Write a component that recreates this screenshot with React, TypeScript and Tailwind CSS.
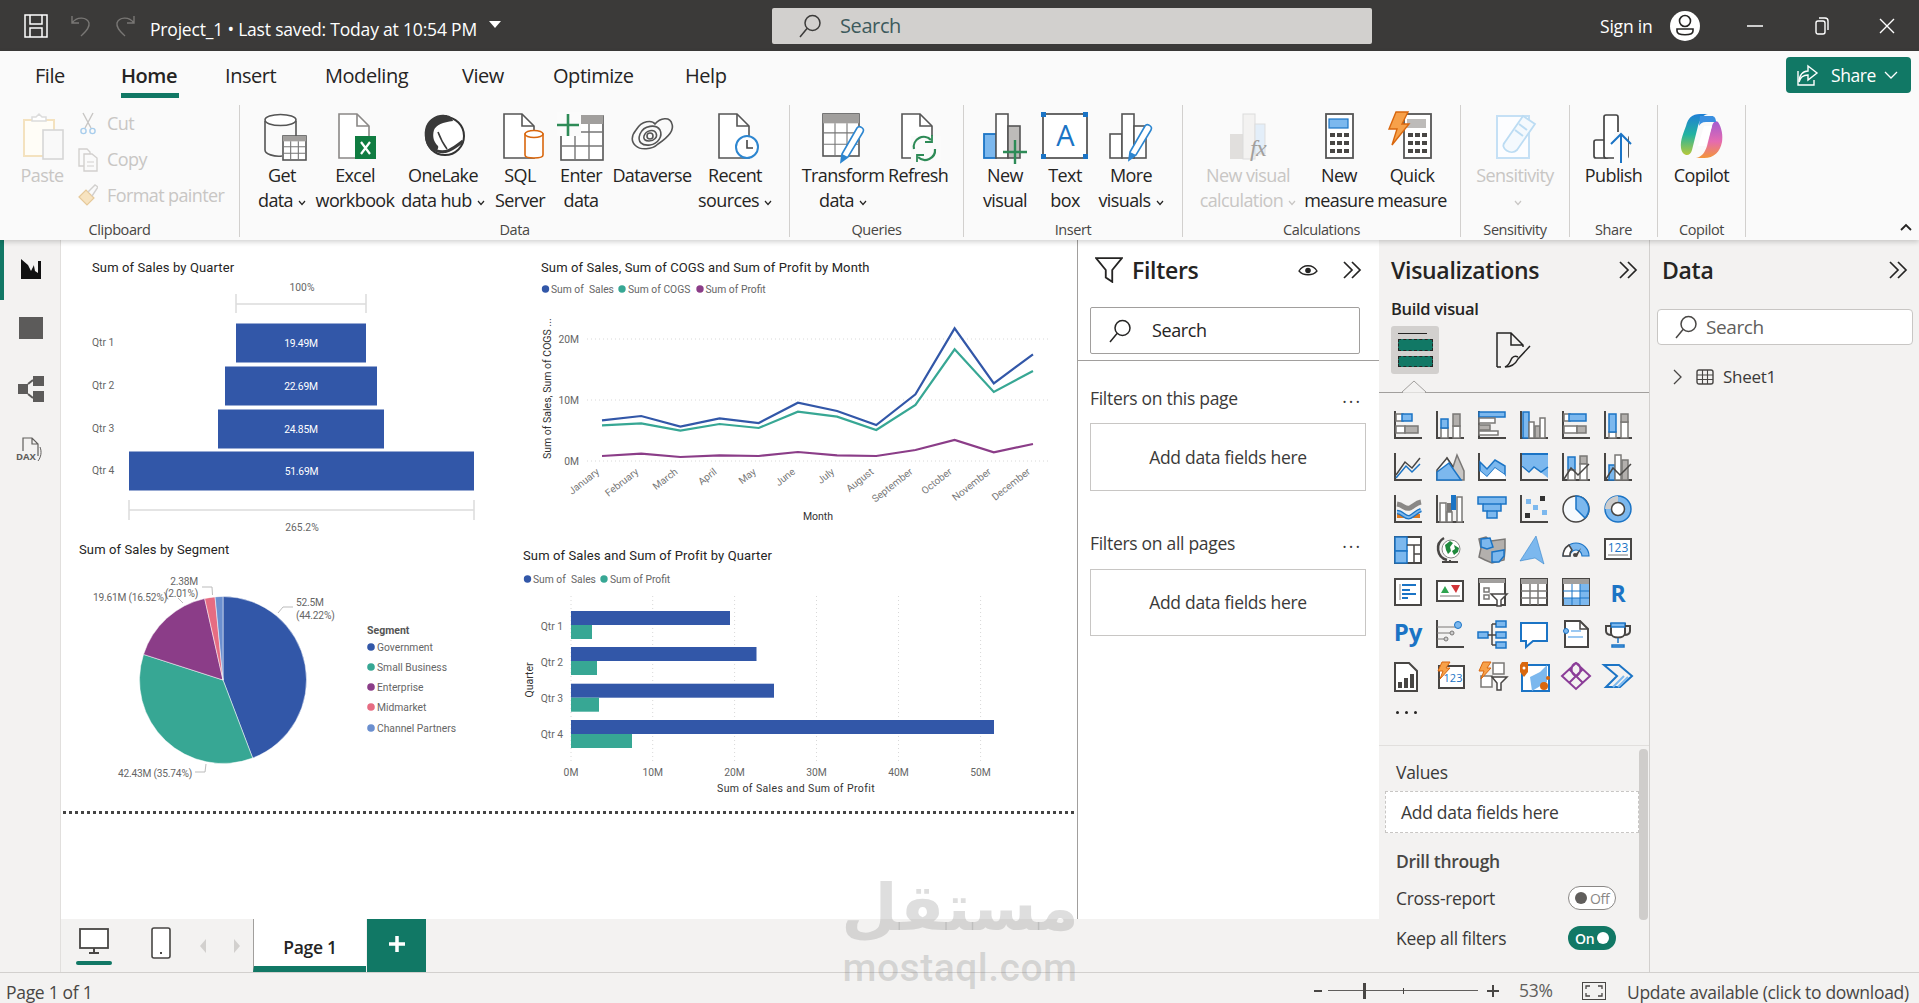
import React from "react";

const D = "#484644", B = "#1b74c5", L = "#7cb8ee", G = "#b3b0ad", GS = "#7a7876", T = "#117865";
const ln = { fill: "none", stroke: D, strokeWidth: 1.5 } as const;
const bl = { fill: L, stroke: B, strokeWidth: 1.5 } as const;
const gr = { fill: G, stroke: GS, strokeWidth: 1.5 } as const;
const wh = { fill: "#fff", stroke: GS, strokeWidth: 1.5 } as const;

const Axis = () => <path d="M1 0V27H28" {...ln} strokeWidth={2} />;
const Bolt = ({ x = 0, y = 0 }: { x?: number; y?: number }) => (
  <path transform={`translate(${x} ${y})`} d="M5 0H13L9 6H13L3 17L6 9H1Z" fill="#f7a14a" stroke="#d9670e" strokeWidth={1} />
);

const gridIcons: React.ReactNode[] = [
  <><Axis /><rect x="2" y="3" width="7" height="7" {...wh} /><rect x="8" y="3" width="10" height="7" {...bl} /><rect x="2" y="15" width="9" height="7" {...wh} /><rect x="11" y="15" width="13" height="7" {...gr} /></>,
  <><Axis /><rect x="5" y="17" width="7" height="10" {...wh} /><rect x="5" y="8" width="7" height="9" {...bl} /><rect x="17" y="15" width="7" height="12" {...wh} /><rect x="17" y="3" width="7" height="12" {...gr} /></>,
  <><Axis /><rect x="1" y="1" width="26" height="5" {...bl} /><rect x="1" y="7" width="16" height="5" {...wh} /><rect x="1" y="14" width="11" height="5" {...gr} /><rect x="1" y="20" width="19" height="4" {...wh} /></>,
  <><Axis /><rect x="3" y="1" width="6" height="26" {...bl} /><rect x="9" y="11" width="5" height="16" {...wh} /><rect x="15" y="15" width="5" height="12" {...gr} /><rect x="20" y="7" width="5" height="20" {...wh} /></>,
  <><Axis /><rect x="2" y="3" width="6" height="7" {...wh} /><rect x="7" y="3" width="17" height="7" {...bl} /><rect x="2" y="15" width="13" height="7" {...wh} /><rect x="15" y="15" width="9" height="7" {...gr} /></>,
  <><Axis /><rect x="5" y="21" width="7" height="6" {...wh} /><rect x="5" y="3" width="7" height="18" {...bl} /><rect x="17" y="11" width="7" height="16" {...wh} /><rect x="17" y="3" width="7" height="8" {...gr} /></>,
  <><Axis /><path d="M2 22L11 9L18 15L26 5" {...ln} fill="none" /><path d="M2 25L12 13L18 19L26 11" fill="none" stroke={B} strokeWidth={1.5} /></>,
  <><path d="M1 27L11 5L17 14L21 2L28 18V27Z" {...gr} fill="#c8c6c4" /><path d="M1 27V17L11 5L17 14" fill="#fff" stroke={D} strokeWidth={1.5} /><path d="M1 27V19L5 16L13 10L25 27Z" {...bl} /></>,
  <><Axis /><path d="M2 9L9 16L17 7L27 13V22L17 15L9 24L2 18Z" {...bl} /><path d="M2 18L9 24L17 15L27 22V26H2Z" fill="#fff" /></>,
  <><Axis /><path d="M2 2H28V8L28 25L14 14L9 18L2 12Z" fill={L} /><path d="M2 1H28" stroke={B} strokeWidth={2} /><path d="M2 13L9 19L14 14L21 19L28 14" fill="none" stroke={B} strokeWidth={1.5} /></>,
  <><Axis /><rect x="6" y="4" width="7" height="13" {...bl} /><rect x="6" y="17" width="7" height="10" {...wh} /><rect x="18" y="3" width="7" height="8" {...gr} /><rect x="18" y="11" width="7" height="16" {...wh} /><path d="M2 26L9 15L16 22L27 11" {...ln} /></>,
  <><Axis /><rect x="5" y="12" width="6" height="15" {...bl} /><rect x="11" y="2" width="6" height="25" {...wh} /><rect x="18" y="7" width="6" height="20" {...gr} /><path d="M2 26L9 15L16 22L27 11" {...ln} /></>,
  <><Axis /><rect x="3" y="19" width="7" height="4" fill="#e07a1f" /><rect x="19" y="19" width="7" height="4" fill="#e07a1f" /><path d="M3 9C10 10 11 15 16 13C20 11 22 8 27 7" fill="none" stroke="#8a8886" strokeWidth={5} /><path d="M3 17C9 17 11 24 16 22C20 20 22 17 27 15" fill="none" stroke={B} strokeWidth={4.5} /><path d="M3 17C9 17 11 24 16 22C20 20 22 17 27 15" fill="none" stroke={L} strokeWidth={1.8} /></>,
  <><Axis /><rect x="4" y="8" width="6" height="19" {...wh} /><rect x="11" y="8" width="5" height="9" fill={GS} /><rect x="11" y="17" width="5" height="10" {...wh} /><rect x="15" y="0" width="5" height="15" fill={B} /><rect x="21" y="2" width="5" height="25" {...wh} /></>,
  <><path d="M0 2H28V9H23V16H19V23H9V16H5V9H0Z" {...bl} /><path d="M5 9H23M9 16H19" stroke={B} strokeWidth={1.5} /></>,
  <><Axis /><rect x="6" y="4" width="5" height="5" fill={L} /><rect x="20" y="1" width="5" height="5" fill="#333" /><rect x="13" y="10" width="5" height="5" fill={L} /><rect x="5" y="18" width="5" height="5" fill="#333" /><rect x="22" y="15" width="5" height="5" fill={L} /></>,
  <><circle cx="14" cy="14" r="13" fill="#f6fafd" stroke={D} strokeWidth={1.5} /><path d="M14 1A13 13 0 0 1 23 23L14 14Z" {...bl} /></>,
  <><circle cx="14" cy="14" r="13" fill={L} stroke={B} strokeWidth={1.5} /><path d="M14 1A13 13 0 0 0 1 14H8A6 6 0 0 1 14 8Z" fill="#ccc" /><circle cx="14" cy="14" r="6.5" fill="#fff" stroke={D} strokeWidth={1.5} /></>,
  <><rect x="1" y="1" width="26" height="26" fill="#fff" stroke={D} strokeWidth={2} /><rect x="1" y="1" width="12" height="14" {...bl} /><rect x="1" y="15" width="12" height="12" {...bl} /><path d="M13 9H27M20 9V27M20 18H27" {...ln} /></>,
  <><path d="M8 2A12 12 0 0 0 11 24" {...ln} strokeWidth={2.5} /><circle cx="15" cy="13" r="9" fill="#fff" stroke="#888" /><path d="M9 9L14 5L17 7L14 11L15 15L12 18L10 14ZM18 9L23 12L22 16L18 19L16 15L19 13Z" fill="#1f8a3d" /><path d="M6 26H22M14 24V26" {...ln} strokeWidth={2} /></>,
  <><path d="M1 3L8 1L13 5L27 3V14L26 24L14 27L7 24L1 21L3 12Z" {...gr} /><path d="M3 3L12 2L15 11L9 13L3 11Z" {...bl} /><path d="M14 16L26 14V20L21 26L14 26Z" {...bl} /></>,
  <path d="M16 0L24 28L15 22L0 25Z" fill={L} stroke={B} strokeWidth={0.5} />,
  <><path d="M1 20A13 13 0 0 1 27 20H20A6 6 0 0 0 8 20Z" fill={L} stroke={B} strokeWidth={1.2} /><path d="M1 20A13 13 0 0 1 7 9L10 14A7 7 0 0 0 8 20Z" fill="#fff" stroke={D} strokeWidth={1.5} /><path d="M12 20L19 12L15 21Z" fill={D} /><circle cx="13" cy="19" r="2" fill={D} /></>,
  <><rect x="1" y="3" width="26" height="20" fill="#fff" stroke={D} strokeWidth={2} /><text x="14" y="16" textAnchor="middle" fontSize="12" fill={B} fontFamily="Open Sans">123</text><path d="M4 19H24" stroke={GS} /></>,
  <><rect x="1" y="1" width="26" height="26" fill="#fff" stroke={D} strokeWidth={2} /><path d="M6 6V22" stroke={G} strokeWidth={1.5} /><path d="M8 7H22M8 12H16M8 16H22M8 20H14" stroke={B} strokeWidth={1.8} /></>,
  <><rect x="1" y="3" width="26" height="20" fill="#fff" stroke={D} strokeWidth={2} /><path d="M5 15L9 8L13 15Z" fill="#2ea44f" /><path d="M15 7H24L20 15Z" fill="#d13438" /><path d="M4 18H24" stroke={GS} /></>,
  <><rect x="1" y="1" width="26" height="26" fill="#fff" stroke={D} strokeWidth={2} /><rect x="1" y="1" width="26" height="4" fill="#a19f9d" /><rect x="6" y="10" width="5" height="4" {...wh} /><rect x="6" y="17" width="5" height="4" {...wh} /><path d="M13 16H29L23 22V28H19V22Z" fill="#fff" stroke={D} strokeWidth={1.5} /></>,
  <><rect x="1" y="1" width="26" height="26" fill="#fff" stroke={D} strokeWidth={2} /><rect x="1" y="1" width="26" height="5" fill="#a19f9d" /><path d="M1 13H27M1 20H27M10 6V27M18 6V27" {...ln} stroke={GS} /></>,
  <><rect x="1" y="1" width="26" height="26" fill="#fff" stroke={D} strokeWidth={2} /><rect x="1" y="1" width="26" height="5" fill="#a19f9d" /><rect x="18" y="6" width="9" height="21" fill={L} /><rect x="2" y="20" width="16" height="7" fill={L} /><path d="M1 13H27M1 20H27M10 6V27M18 6V27" {...ln} stroke={B} strokeWidth={1} /></>,
  <text x="14" y="24" textAnchor="middle" fontSize="23" fontWeight="700" fill={B} fontFamily="Open Sans">R</text>,
  <text x="14" y="21" textAnchor="middle" fontSize="24" fontWeight="700" fill={B} fontFamily="Open Sans">Py</text>,
  <><Axis /><path d="M1 7H20M1 13H14M1 19H10" stroke={GS} strokeWidth={1} /><circle cx="22" cy="5" r="3.5" fill={L} stroke={B} /><circle cx="16" cy="13" r="2" fill="#ccc" stroke={GS} /><circle cx="10" cy="19" r="2" fill="#ccc" stroke={GS} /></>,
  <><rect x="0" y="12" width="10" height="6" {...bl} /><rect x="18" y="1" width="10" height="6" {...bl} /><rect x="18" y="12" width="10" height="6" {...bl} /><rect x="18" y="22" width="10" height="6" {...bl} /><path d="M10 15H18M14 4V25M14 4H18M14 25H18" {...ln} /></>,
  <path d="M1 3H27V21H13L6 27V21H1Z" fill="#fff" stroke={B} strokeWidth={2} />,
  <><path d="M3 1H18L26 9V27H3Z" fill="#fff" stroke={D} strokeWidth={2} /><path d="M18 1V9H26" {...ln} /><circle cx="4" cy="11" r="2.5" fill={L} stroke={B} /><path d="M9 11H19M6 17H21" stroke={L} strokeWidth={1.5} /></>,
  <><path d="M7 4H21V13C21 19 7 19 7 13Z" fill="#fff" stroke={D} strokeWidth={2} /><path d="M7 3H21V7H7Z" fill={L} stroke={B} strokeWidth={1.5} /><path d="M7 6H2V11C2 14 5 15 8 15M21 6H26V11C26 14 23 15 20 15" {...ln} strokeWidth={2} /><path d="M14 18V23M8 27H20V25H8Z" fill={L} stroke={B} strokeWidth={1.5} /></>,
  <><path d="M1 1H15L23 9V29H1Z" fill="#fff" stroke={D} strokeWidth={2} /><rect x="4" y="20" width="4" height="6" fill={D} /><rect x="10" y="16" width="4" height="10" fill={D} /><rect x="16" y="12" width="4" height="14" fill={D} /></>,
  <><rect x="3" y="4" width="25" height="22" fill="#fff" stroke={D} strokeWidth={2} /><text x="17" y="20" textAnchor="middle" fontSize="11" fill={B} fontFamily="Open Sans">123</text><Bolt x={1} y={0} /></>,
  <><rect x="15" y="1" width="11" height="11" {...wh} /><rect x="3" y="14" width="11" height="11" {...wh} /><path d="M14 15H29L23 21V28H19V21Z" fill="#fff" stroke={D} strokeWidth={1.5} /><Bolt x={0} y={0} /></>,
  <><rect x="2" y="3" width="27" height="26" fill="#fff" stroke={B} strokeWidth={2} /><path d="M10 15L20 10L27 3V20L12 29Z" fill={L} /><path d="M0 3V10L4 15L8 10V0H2Z" fill="#d9670e" /><circle cx="4" cy="6" r="1.5" fill="#fff" /><circle cx="24" cy="24" r="4" fill="#d9670e" /><circle cx="28" cy="16" r="2" fill="#d9670e" /></>,
  <path d="M14 1L28 14L14 27L0 14ZM7 7L21 21M21 7L7 21M14 1A7 7 0 0 1 14 14A7 7 0 0 1 14 1" fill="none" stroke="#8b3d98" strokeWidth={2} />,
  <><path d="M0 3H15L28 14L16 25H2L13 14Z" fill="none" stroke={B} strokeWidth={2} /><path d="M9 25L20 14M14 25L24 15" stroke={L} strokeWidth={2} /></>,
];

function slice(cx: number, cy: number, r: number, a: number, b: number) {
  const p = (t: number) => [cx + r * Math.sin(t * 2 * Math.PI), cy - r * Math.cos(t * 2 * Math.PI)];
  const [x1, y1] = p(a), [x2, y2] = p(b);
  return `M${cx} ${cy}L${x1} ${y1}A${r} ${r} 0 ${b - a > 0.5 ? 1 : 0} 1 ${x2} ${y2}Z`;
}
const toPts = (v: number[]) => v.map((y, i) => `${602 + i * 39.18},${240 + y / 3}`).join(" ");
const months = ["January", "February", "March", "April", "May", "June", "July", "August", "September", "October", "November", "December"];
const BLUE = "#3257a8", TEAL = "#37a794", PURP = "#8b3d88";

const cText = "fill-[#666666] text-[10.3px]";
const cPie = "fill-[#666666] text-[10.2px] tracking-[-0.2px]";
const cTitle = "fill-[#252423] text-[13px] tracking-[0.12px]";
const cAxis = "fill-[#333333] text-[10.5px]";
const chartSvg = "font-['Roboto',sans-serif] overflow-visible";

function Funnel() {
  const rows = [["Qtr 1", 236, 130, 323, 342, "19.49M"], ["Qtr 2", 225, 152, 366, 385, "22.69M"], ["Qtr 3", 218, 166, 409, 428, "24.85M"], ["Qtr 4", 129, 345, 451, 470, "51.69M"]] as const;
  return (
    <svg viewBox="61 240 449 290" className={`w-[449px] h-[290px] ${chartSvg}`}>
      <text x="92" y="272" className={cTitle}>Sum of Sales by Quarter</text>
      <text x="302" y="291" textAnchor="middle" className={cText}>100%</text>
      <path d="M236 294V313M366 294V313M236 304H366" stroke="#dcdcdc" strokeWidth={1.5} fill="none" />
      {rows.map(([l, x, w, y, ty, v]) => (
        <g key={l}>
          <text x="92" y={ty + 4} className={cText}>{l}</text>
          <rect x={x} y={y + 0.5} width={w} height={39} fill={BLUE} />
          <text x={x + w / 2} y={y + 24} textAnchor="middle" className="fill-white text-[10.3px] tracking-[-0.2px]">{v}</text>
        </g>
      ))}
      <path d="M129 500V520M474 500V520M129 510H474" stroke="#dcdcdc" strokeWidth={1.5} fill="none" />
      <text x="302" y="531" textAnchor="middle" className={cText}>265.2%</text>
    </svg>
  );
}

function LineChart() {
  return (
    <svg viewBox="510 240 567 290" className={`w-[567px] h-[290px] ${chartSvg}`}>
      <text x="541" y="272" className={cTitle}>Sum of Sales, Sum of COGS and Sum of Profit by Month</text>
      <circle cx="545.5" cy="289" r="3.7" fill={BLUE} />
      <text x="551" y="293" className={cText} xmlSpace="preserve">Sum of  Sales</text>
      <circle cx="622" cy="289" r="3.7" fill={TEAL} />
      <text x="628" y="293" className={cText}>Sum of COGS</text>
      <circle cx="700" cy="289" r="3.7" fill={PURP} />
      <text x="705.5" y="293" className={cText}>Sum of Profit</text>
      <text transform="translate(551 459) rotate(-90)" className={cAxis}>Sum of Sales, Sum of COGS ...</text>
      {[["20M", 339], ["10M", 400], ["0M", 461]].map(([l, y]) => (
        <g key={l}>
          <text x="579" y={Number(y) + 4} textAnchor="end" className={cText}>{l}</text>
          <path d={`M587 ${y}H1049`} stroke="#d8d8d8" strokeDasharray="1 3" />
        </g>
      ))}
      <polyline points={toPts([541, 528, 560, 535, 549, 488, 513, 555, 463, 265, 430, 343])} fill="none" stroke={BLUE} strokeWidth={2.2} />
      <polyline points={toPts([556, 550, 572, 552, 564, 515, 530, 570, 495, 328, 456, 393])} fill="none" stroke={TEAL} strokeWidth={2.2} />
      <polyline points={toPts([648, 641, 651, 646, 648, 636, 646, 648, 630, 600, 637, 612])} fill="none" stroke={PURP} strokeWidth={2.2} />
      {months.map((m, i) => (
        <text key={m} transform={`translate(${600 + i * 39.18} 473) rotate(-38)`} textAnchor="end" className="fill-[#777777] text-[10px]">{m}</text>
      ))}
      <text x="818" y="520" textAnchor="middle" className={cAxis}>Month</text>
    </svg>
  );
}

function Pie() {
  const vals = [[0.4422, BLUE], [0.3574, TEAL], [0.1652, PURP], [0.0201, "#e66c82"], [0.0151, "#6b8fcf"]] as const;
  let a = 0;
  const leg = [["Government", 647, BLUE], ["Small Business", 667, TEAL], ["Enterprise", 687, PURP], ["Midmarket", 707, "#e66c82"], ["Channel Partners", 728, "#6b8fcf"]] as const;
  return (
    <svg viewBox="61 530 449 280" className={`w-[449px] h-[280px] ${chartSvg}`}>
      <text x="79" y="554" className={cTitle}>Sum of Sales by Segment</text>
      {vals.map(([v, c]) => {
        const d = slice(223, 680, 83.5, a, a + v);
        a += v;
        return <path key={c} d={d} fill={c} stroke="#fff" strokeWidth={0.5} />;
      })}
      <path d="M278 613L283 607H293M202 587H212L212.5 595M178 598L183 603M206 764L205 772H195" fill="none" stroke="#bbbbbb" />
      <text x="198" y="585" textAnchor="end" className={cPie}>2.38M</text>
      <text x="198" y="597" textAnchor="end" className={cPie}>(2.01%)</text>
      <text x="167" y="601" textAnchor="end" className={cPie}>19.61M (16.52%)</text>
      <text x="296" y="606" className={cPie}>52.5M</text>
      <text x="296" y="619" className={cPie}>(44.22%)</text>
      <text x="192" y="777" textAnchor="end" className={cPie}>42.43M (35.74%)</text>
      <text x="367" y="634" className="fill-[#555555] text-[10.5px] font-bold">Segment</text>
      {leg.map(([l, y, c]) => (
        <g key={l}>
          <circle cx="371" cy={y} r="3.8" fill={c} />
          <text x="377" y={y + 4} className={cText}>{l}</text>
        </g>
      ))}
    </svg>
  );
}

function Bars() {
  const rows = [["Qtr 1", 611, 730, 592, 630], ["Qtr 2", 647, 756.5, 597, 666], ["Qtr 3", 683.7, 774, 599, 702], ["Qtr 4", 720, 994, 632, 738]] as const;
  return (
    <svg viewBox="510 530 567 280" className={`w-[567px] h-[280px] ${chartSvg}`}>
      <text x="523" y="560" className={cTitle}>Sum of Sales and Sum of Profit by Quarter</text>
      <circle cx="527.5" cy="579" r="3.7" fill={BLUE} />
      <text x="533" y="583" className={cText} xmlSpace="preserve">Sum of  Sales</text>
      <circle cx="604" cy="579" r="3.7" fill={TEAL} />
      <text x="610" y="583" className={cText}>Sum of Profit</text>
      {[["0M", 571], ["10M", 652.7], ["20M", 734.6], ["30M", 816.5], ["40M", 898.5], ["50M", 980.6]].map(([l, x]) => (
        <g key={l}>
          <path d={`M${x} 596V762`} stroke="#d8d8d8" strokeDasharray="1 3" />
          <text x={x} y="776" textAnchor="middle" className={cText}>{l}</text>
        </g>
      ))}
      {rows.map(([l, y, s, p, ty]) => (
        <g key={l}>
          <text x="563" y={ty} textAnchor="end" className={cText}>{l}</text>
          <rect x="571" y={y} width={s - 571} height={14} fill={BLUE} />
          <rect x="571" y={y + 14} width={p - 571} height={14} fill={TEAL} />
        </g>
      ))}
      <text transform="translate(533 680) rotate(-90)" textAnchor="middle" className={cAxis}>Quarter</text>
      <text x="796" y="792" textAnchor="middle" className={`${cAxis} tracking-[0.4px]`}>Sum of Sales and Sum of Profit</text>
    </svg>
  );
}

const IconBox = ({ children }: { children: React.ReactNode }) => (
  <svg viewBox="0 0 48 48" className="w-[48px] h-[48px] shrink-0 overflow-visible">{children}</svg>
);
const doc = "M8 2H26L38 14V46H8Z";
const fold = "M26 2V14H38";
const dk = { fill: "none", stroke: "#555", strokeWidth: 1.6 } as const;
const TableG = ({ x, y, w, h }: { x: number; y: number; w: number; h: number }) => (
  <g>
    <rect x={x} y={y} width={w} height={h} fill="#fff" stroke="#555" strokeWidth={1.6} />
    <rect x={x} y={y} width={w} height={h / 4.5} fill="#a19f9d" />
    <path d={`M${x} ${y + h * 0.45}H${x + w}M${x} ${y + h * 0.72}H${x + w}M${x + w / 3} ${y + h / 4.5}V${y + h}M${x + (2 * w) / 3} ${y + h / 4.5}V${y + h}`} stroke="#777" strokeWidth={1.1} />
  </g>
);
const Pencil = ({ x = 0, y = 0 }: { x?: number; y?: number }) => (
  <g transform={`translate(${x} ${y})`}>
    <path d="M3 30L18 4C20 1 26 4 24 8L9 33L2 38Z" fill="#fff" stroke="#2d86d0" strokeWidth={1.6} />
    <path d="M3 30L9 33L2 38Z" fill="#2d86d0" />
  </g>
);
const Calc = ({ x = 0 }: { x?: number }) => (
  <g transform={`translate(${x} 0)`}>
    <rect x="10" y="2" width="27" height="44" fill="#fff" stroke="#555" strokeWidth={1.8} />
    {[21, 29, 37].flatMap((y) => [14, 21, 28].map((cx) => <rect key={`${y}${cx}`} x={cx} y={y} width="5" height="4" fill="#484644" />))}
  </g>
);

const icons: Record<string, React.ReactNode> = {
  get: <IconBox><path d="M7 9V38C7 42 16 45 24 44M38 9V24" {...dk} /><ellipse cx="22.5" cy="8" rx="15.5" ry="5.5" fill="#fff" stroke="#555" strokeWidth={1.6} /><TableG x={25} y={24} w={23} h={24} /></IconBox>,
  excel: <IconBox><path d={doc} fill="#fff" stroke="#8a8886" strokeWidth={1.6} /><path d={fold} fill="none" stroke="#8a8886" strokeWidth={1.6} /><rect x="24" y="24" width="21" height="23" fill="#107c41" /><path d="M30 30L39 42M39 30L30 42" stroke="#fff" strokeWidth={2.2} /></IconBox>,
  lake: <IconBox><circle cx="26" cy="24" r="19" fill="#fff" stroke="#333" strokeWidth={2} /><path d="M26 3C18 2 11 6 7 14C4 22 6 33 13 39C18 40 20 36 19 34C15 30 13 25 15 18C17 13 24 10 34 9C33 5 30 3 26 3Z" fill="#3a3a3a" /><path d="M16 38C26 43 34 37 44 29" fill="none" stroke="#3a3a3a" strokeWidth={3} /><path d="M19 20C22 28 25 33 28 37" fill="none" stroke="#3a3a3a" strokeWidth={1.6} /></IconBox>,
  sql: <IconBox><path d={doc} fill="#fff" stroke="#555" strokeWidth={1.6} /><path d={fold} fill="none" stroke="#555" strokeWidth={1.6} /><path d="M29 22V43C29 47 47 47 47 43V22Z" fill="#fff" stroke="#d9670e" strokeWidth={1.6} /><ellipse cx="38" cy="22" rx="9" ry="3.5" fill="#fff" stroke="#d9670e" strokeWidth={1.6} /></IconBox>,
  enter: <IconBox><rect x="4" y="4" width="42" height="44" fill="#fff" stroke="#555" strokeWidth={1.6} /><rect x="14" y="3" width="32" height="9" fill="#a19f9d" /><path d="M4 20H46M4 34H46M18 12V48M32 12V48" stroke="#777" strokeWidth={1.4} /><rect x="0" y="0" width="24" height="24" fill="#fbfbfb" /><path d="M0 13H22M11 2V24" stroke="#2e8b57" strokeWidth={2.6} /></IconBox>,
  verse: <IconBox><path d="M8 18C14 8 24 8 27 12C32 6 42 4 44 12C47 20 36 28 30 32C24 38 12 38 8 34C3 30 3 24 8 18Z" {...dk} /><path d="M12 22C16 13 28 12 32 18C35 24 30 32 22 33C14 34 9 30 12 22Z" {...dk} /><path d="M16 24C18 18 26 17 28 21C30 25 26 29 21 29C17 29 15 27 16 24Z" {...dk} /><circle cx="22" cy="24" r="3" {...dk} /></IconBox>,
  recent: <IconBox><path d={doc} fill="#fff" stroke="#555" strokeWidth={1.6} /><path d={fold} fill="none" stroke="#555" strokeWidth={1.6} /><circle cx="36" cy="35" r="11" fill="#fff" stroke="#2d86d0" strokeWidth={2} /><path d="M36 28V36H42" fill="none" stroke="#444" strokeWidth={1.6} /></IconBox>,
  paste: <IconBox><g transform="translate(3 0)"><rect x="3" y="8" width="30" height="36" fill="#fffdf7" stroke="#f4e2bf" strokeWidth={2} /><path d="M11 9V5H15L18 2L21 5H25V9Z" fill="#fff" stroke="#dcdcdc" strokeWidth={1.5} /><rect x="22" y="18" width="20" height="29" fill="#f9f9f9" stroke="#d6d6d6" strokeWidth={1.6} /></g></IconBox>,
  transform: <IconBox><TableG x={4} y={2} w={36} h={42} /><Pencil x={20} y={12} /></IconBox>,
  refresh: <IconBox><path d="M8 2H26L38 14V46H8Z" fill="#fff" stroke="#555" strokeWidth={1.6} /><path d="M26 2V14H38" {...dk} /><rect x="17" y="24" width="30" height="24" fill="#fbfbfb" /><path d="M20 37A10 10 0 0 1 37 28M41 37A10 10 0 0 1 24 45" fill="none" stroke="#2e8b57" strokeWidth={2.2} /><path d="M38 23V30H31M23 50V43H30" fill="none" stroke="#2e8b57" strokeWidth={1.8} /></IconBox>,
  newv: <IconBox><rect x="3" y="22" width="12" height="24" fill={L} stroke="#1b74c5" strokeWidth={1.8} /><rect x="15" y="2" width="12" height="44" fill="#fff" stroke="#555" strokeWidth={1.6} /><rect x="27" y="14" width="12" height="32" fill="#bdbbb9" stroke="#555" strokeWidth={1.6} /><path d="M22 40H46M34 28V52" stroke="#2e8b57" strokeWidth={2.4} /></IconBox>,
  text: <IconBox><rect x="2" y="2" width="44" height="44" fill="#fff" stroke="#444" strokeWidth={1.6} />{[[0, 0], [42, 0], [0, 42], [42, 42]].map(([x, y]) => <rect key={`${x}${y}`} x={x} y={y} width="5" height="5" fill="#1b74c5" />)}<text x="24" y="34" textAnchor="middle" fontSize="29" fill="#1b74c5" fontFamily="Open Sans">A</text></IconBox>,
  more: <IconBox><rect x="3" y="22" width="12" height="24" fill="#fff" stroke="#555" strokeWidth={1.6} /><rect x="15" y="2" width="12" height="44" fill="#fff" stroke="#555" strokeWidth={1.6} /><rect x="27" y="14" width="12" height="32" fill="#fff" stroke="#555" strokeWidth={1.6} /><Pencil x={20} y={10} /></IconBox>,
  calc: <IconBox><rect x="6" y="22" width="13" height="25" fill="#e1dfdd" /><rect x="19" y="2" width="12" height="45" fill="#f3f2f1" stroke="#dcdcdc" /><rect x="31" y="12" width="10" height="30" fill="#e3eef9" stroke="#ddd" /><text x="34" y="44" textAnchor="middle" fontSize="24" fontStyle="italic" fill="#a19f9d" fontFamily="Liberation Serif">fx</text></IconBox>,
  measure: <IconBox><Calc x={1} /><rect x="14" y="7" width="19" height="9" fill={L} stroke="#1b74c5" strokeWidth={1.2} /></IconBox>,
  quick: <IconBox><Calc x={6} /><rect x="19" y="7" width="19" height="9" fill="#bdbbb9" /><path d="M8 0H20L14 12H21L4 33L9 17H1Z" fill="#f7a14a" stroke="#d9670e" strokeWidth={1.4} /></IconBox>,
  sens: <IconBox><rect x="6" y="4" width="32" height="42" fill="#fcfdff" stroke="#c5e0f5" strokeWidth={2} /><path d="M14 30L32 4L44 12L26 38C20 44 8 36 14 30Z" fill="#f4f9fd" stroke="#bcdcf3" strokeWidth={1.8} /><path d="M24 18L32 24M28 12L36 18" stroke="#bcdcf3" strokeWidth={2} /></IconBox>,
  publish: <IconBox><rect x="4" y="28" width="14" height="18" rx="2" fill="#fff" stroke="#444" strokeWidth={1.7} /><rect x="14" y="3" width="14" height="43" rx="2" fill="#fff" stroke="#444" strokeWidth={1.7} /><rect x="28" y="24" width="10" height="22" rx="2" fill="#fff" stroke="#444" strokeWidth={1.7} /><rect x="24" y="20" width="14" height="32" fill="#fbfbfb" /><path d="M31 51V22M21 32L31 22L41 32" fill="none" stroke="#1b74c5" strokeWidth={2} /></IconBox>,
  copilot: (
    <IconBox>
      <defs>
        <linearGradient id="cp1" x1="0" y1="0" x2="0" y2="1"><stop offset="0" stopColor="#1f7fd6" /><stop offset=".5" stopColor="#22b3a0" /><stop offset="1" stopColor="#b8c93a" /></linearGradient>
        <linearGradient id="cp2" x1="0" y1="0" x2="0" y2="1"><stop offset="0" stopColor="#a25bd0" /><stop offset=".55" stopColor="#e56bb0" /><stop offset="1" stopColor="#f3963a" /></linearGradient>
      </defs>
      <path d="M8 14C10 6 14 2 22 2H30C24 3 22 8 20 14L14 38C12 46 4 44 3 36C2 28 6 20 8 14Z" fill="url(#cp1)" />
      <path d="M40 10C44 16 45 24 44 30C42 40 36 46 26 46H18C24 45 27 40 29 34L34 14C35 10 38 8 40 10Z" fill="url(#cp2)" />
      <path d="M22 4H34C36 4 38 6 38 10H28C24 10 22 12 21 14Z" fill="#3a8fe0" />
      <path d="M26 14H34L28 34H20Z" fill="#fff" />
    </IconBox>
  ),
};

const Caret = () => (
  <svg viewBox="0 0 8 6" className="inline-block w-[8px] h-[6px] ml-[5px] align-[1px]"><path d="M1 1L4 4.5L7 1" fill="none" stroke="currentColor" strokeWidth={1.2} /></svg>
);

type ItemP = { w: string; ic: string; a: string; b?: string; caret?: boolean; dis?: boolean };
const Item = ({ w, ic, a, b, caret, dis }: ItemP) => (
  <div className={`${w} shrink-0 flex flex-col items-center pt-[7px] text-[18px] leading-[25px] whitespace-nowrap tracking-[-0.6px] ${dis ? "text-[#c8c6c4]" : "text-[#252423]"}`}>
    {icons[ic]}
    <div className="mt-[3px]">{a}{caret && b === undefined ? <Caret /> : null}</div>
    <div className="min-h-[25px]">{b}{caret && b !== undefined ? <Caret /> : null}</div>
  </div>
);

const Group = ({ w, label, ml, children }: { w: string; label: string; ml: string; children: React.ReactNode }) => (
  <div className={`${w} shrink-0 h-[132px] border-r border-[#d2d0ce] flex flex-col`}>
    <div className={`h-[117px] flex ${ml}`}>{children}</div>
    <div className="h-[15px] leading-[15px] text-[14.5px] tracking-[-0.4px] text-center text-[#484644] whitespace-nowrap">{label}</div>
  </div>
);

const SearchIc = ({ c = "#252423" }: { c?: string }) => (
  <svg viewBox="0 0 24 24" className="w-[24px] h-[24px] shrink-0"><circle cx="14.5" cy="9" r="7.5" fill="none" stroke={c} strokeWidth={1.5} /><path d="M9 14.5L2 23" stroke={c} strokeWidth={1.5} /></svg>
);
const Chevs = () => (
  <svg viewBox="0 0 24 24" className="w-[24px] h-[24px] shrink-0"><path d="M4 4L12 12L4 20M12 4L20 12L12 20" fill="none" stroke="#252423" strokeWidth={1.7} /></svg>
);

export default function App() {
  return (
    <div className="relative w-[1919px] h-[1003px] overflow-hidden flex flex-col bg-[#f3f2f1] font-['Open_Sans','Noto_Sans',sans-serif] text-[#252423]">
      {/* title bar */}
      <div className="h-[51px] shrink-0 bg-[#3b3a39] flex items-center text-white">
        <div className="w-[772px] shrink-0 flex items-center">
          <svg viewBox="0 0 24 24" className="ml-[24px] w-[24px] h-[24px]"><path d="M1 1H23V23H1ZM6 1V10H18V1M6 23V14H18V23" fill="none" stroke="#fff" strokeWidth={1.5} /></svg>
          <svg viewBox="0 0 20 22" className="ml-[23px] w-[20px] h-[22px]"><path d="M1 1V8H8M1 8C6 1 16 2 18 8C19 13 14 17 10 21" fill="none" stroke="#797775" strokeWidth={1.4} /></svg>
          <svg viewBox="0 0 20 22" className="ml-[24px] w-[20px] h-[22px]"><path d="M19 1V8H12M19 8C14 1 4 2 2 8C1 13 6 17 10 21" fill="none" stroke="#797775" strokeWidth={1.4} /></svg>
          <span className="ml-[15px] w-[339px] mt-[7px] text-[17.5px] tracking-[-0.19px] whitespace-nowrap">Project_1 • Last saved: Today at 10:54 PM</span>
          <svg viewBox="0 0 12 8" className="w-[12px] h-[8px] -mt-[2px]"><path d="M0 0H12L6 7Z" fill="#fff" /></svg>
        </div>
        <div className="w-[600px] h-[36px] shrink-0 bg-[#d2d0ce] rounded-[2px] flex items-center pl-[26px]">
          <SearchIc c="#3b3a39" />
          <span className="ml-[18px] mt-[1px] text-[20px] tracking-[-0.4px] text-[#3d5a5c]">Search</span>
        </div>
        <span className="ml-[228px] w-[70px] text-[17.5px] tracking-[-0.2px] mt-[1px]">Sign in</span>
        <svg viewBox="0 0 30 30" className="w-[30px] h-[30px]"><circle cx="15" cy="15" r="15" fill="#fff" /><circle cx="15" cy="10" r="5.5" fill="none" stroke="#252423" strokeWidth={1.6} /><path d="M7 18H23V20C23 25 7 25 7 20Z" fill="none" stroke="#252423" strokeWidth={1.6} /></svg>
        <svg viewBox="0 0 16 2" className="ml-[47px] w-[16px] h-[2px]"><path d="M0 1H16" stroke="#fff" strokeWidth={1.5} /></svg>
        <svg viewBox="0 0 14 18" className="ml-[52px] w-[14px] h-[18px]"><rect x="1" y="4" width="9" height="13" rx="2" fill="none" stroke="#fff" strokeWidth={1.4} /><path d="M4 1H10C12 1 13 2 13 4V13" fill="none" stroke="#fff" strokeWidth={1.4} /></svg>
        <svg viewBox="0 0 16 16" className="ml-[50px] w-[16px] h-[16px]"><path d="M1 1L15 15M15 1L1 15" stroke="#fff" strokeWidth={1.4} /></svg>
      </div>

      {/* ribbon */}
      <div className="h-[189px] shrink-0 bg-[#fafafa] relative z-10 shadow-[0_2px_5px_rgba(0,0,0,0.18)]">
        <div className="h-[54px] flex text-[20px] leading-[28px] tracking-[-0.45px] pl-[35px]">
          {[["w-[86px]", "File"], ["w-[104px]", "Home"], ["w-[100px]", "Insert"], ["w-[137px]", "Modeling"], ["w-[91px]", "View"], ["w-[132px]", "Optimize"], ["w-[60px]", "Help"]].map(([w, t]) => (
            <div key={t} className={`${w} pt-[11px]`}>
              {t === "Home" ? <div className="w-[58px] h-[36px] border-b-[5px] border-[#117865] font-semibold whitespace-nowrap">{t}</div> : t}
            </div>
          ))}
          <div className="ml-[1041px] mt-[6px] w-[125px] h-[36px] rounded-[4px] bg-[#117865] text-white flex items-center pl-[9px] text-[17.5px] tracking-[-0.4px] shrink-0">
            <svg viewBox="0 0 24 24" className="w-[24px] h-[24px]"><path d="M13 3L22 10L13 17V12C8 12 5 15 4 19C4 12 8 8 13 8Z" fill="none" stroke="#fff" strokeWidth={1.4} /><path d="M3 8V22H19V17" fill="none" stroke="#fff" strokeWidth={1.4} /></svg>
            <span className="ml-[12px]">Share</span>
            <svg viewBox="0 0 14 8" className="ml-[8px] w-[14px] h-[8px]"><path d="M1 1L7 7L13 1" fill="none" stroke="#fff" strokeWidth={1.3} /></svg>
          </div>
        </div>
        <div className="h-[132px] flex">
          <Group w="w-[240px]" label="Clipboard" ml="pl-[12px]">
            <Item w="w-[60px]" ic="paste" a="Paste" dis />
            <div className="pl-[6px] flex flex-col text-[18px] tracking-[-0.6px] text-[#c8c6c4] whitespace-nowrap">
              <div className="h-[37px] flex items-center gap-[9px]">
                <svg viewBox="0 0 20 24" className="w-[20px] h-[24px]"><path d="M5 1L13 16M15 1L7 16" stroke="#c8c6c4" strokeWidth={1.4} /><circle cx="5.5" cy="19" r="2.6" fill="none" stroke="#a8cdec" strokeWidth={1.4} /><circle cx="14.5" cy="19" r="2.6" fill="none" stroke="#a8cdec" strokeWidth={1.4} /></svg>
                Cut
              </div>
              <div className="h-[35px] flex items-center gap-[9px]">
                <svg viewBox="0 0 20 24" className="w-[20px] h-[24px]"><path d="M1 1H9L12 4V18H1Z" fill="none" stroke="#d2d0ce" strokeWidth={1.4} /><path d="M6 6H14L19 10V23H6Z" fill="#fafafa" stroke="#d2d0ce" strokeWidth={1.4} /><path d="M9 14H16M9 18H16" stroke="#d2d0ce" /></svg>
                Copy
              </div>
              <div className="h-[36px] flex items-center gap-[9px]">
                <svg viewBox="0 0 20 24" className="w-[20px] h-[24px]"><path d="M1 14L8 7L16 15L9 22Z" fill="#f7e3c0" stroke="#e6c99a" strokeWidth={1.2} /><path d="M10 9L17 2L20 4L14 13" fill="none" stroke="#d2d0ce" strokeWidth={1.4} /></svg>
                Format painter
              </div>
            </div>
          </Group>
          <Group w="w-[550px]" label="Data" ml="pl-[10px]">
            <Item w="w-[64px]" ic="get" a="Get" b="data" caret />
            <Item w="w-[82px]" ic="excel" a="Excel" b="workbook" />
            <Item w="w-[94px]" ic="lake" a="OneLake" b="data hub" caret />
            <Item w="w-[60px]" ic="sql" a="SQL" b="Server" />
            <Item w="w-[62px]" ic="enter" a="Enter" b="data" />
            <Item w="w-[80px]" ic="verse" a="Dataverse" />
            <Item w="w-[86px]" ic="recent" a="Recent" b="sources" caret />
          </Group>
          <Group w="w-[174px]" label="Queries" ml="pl-[10px]">
            <Item w="w-[86px]" ic="transform" a="Transform" b="data" caret />
            <Item w="w-[64px]" ic="refresh" a="Refresh" />
          </Group>
          <Group w="w-[219px]" label="Insert" ml="pl-[11px]">
            <Item w="w-[60px]" ic="newv" a="New" b="visual" />
            <Item w="w-[60px]" ic="text" a="Text" b="box" />
            <Item w="w-[72px]" ic="more" a="More" b="visuals" caret />
          </Group>
          <Group w="w-[278px]" label="Calculations" ml="pl-[10px]">
            <Item w="w-[110px]" ic="calc" a="New visual" b="calculation" caret dis />
            <Item w="w-[72px]" ic="measure" a="New" b="measure" />
            <Item w="w-[74px]" ic="quick" a="Quick" b="measure" />
          </Group>
          <Group w="w-[109px]" label="Sensitivity" ml="pl-0">
            <Item w="w-[108px]" ic="sens" a="Sensitivity" b="" caret dis />
          </Group>
          <Group w="w-[88px]" label="Share" ml="pl-0">
            <Item w="w-[87px]" ic="publish" a="Publish" />
          </Group>
          <Group w="w-[88px]" label="Copilot" ml="pl-0">
            <Item w="w-[87px]" ic="copilot" a="Copilot" />
          </Group>
          <div className="flex-1 flex justify-end items-end pr-[7px] pb-[6px]">
            <svg viewBox="0 0 12 8" className="w-[12px] h-[8px]"><path d="M1 7L6 2L11 7" fill="none" stroke="#252423" strokeWidth={1.8} /></svg>
          </div>
        </div>
      </div>

      {/* main */}
      <div className="h-[732px] shrink-0 flex">
        {/* rail */}
        <div className="w-[61px] shrink-0 border-r border-[#e1dfdd] flex flex-col relative">
          <div className="h-[60px] border-l-[4px] border-[#117865] pl-[17px] pt-[19px]">
            <svg viewBox="0 0 20 20" className="w-[20px] h-[20px]"><path d="M0 0L7 6L10 12L13 6V7L14 12L17 14V2H20V20H0Z" fill="#111" /></svg>
          </div>
          <div className="pl-[19px] pt-[17px]">
            <div className="w-[24px] h-[22px] bg-[#5c5b5a]" />
          </div>
          <svg viewBox="0 0 26 26" className="ml-[18px] mt-[37px] w-[26px] h-[26px]"><rect x="0" y="8" width="10" height="10" fill="#5c5b5a" /><rect x="15" y="0" width="11" height="10" fill="#5c5b5a" /><rect x="15" y="15" width="11" height="11" fill="#5c5b5a" /><path d="M10 8L15 4M10 18L15 22" stroke="#5c5b5a" strokeWidth={2} /></svg>
          <svg viewBox="0 0 26 24" className="ml-[16px] mt-[35px] w-[26px] h-[24px] overflow-visible"><path d="M7 14V1H16L22 7V19M16 1V7H22" fill="none" stroke="#605e5c" strokeWidth={1.2} /><path d="M24 10C26 15 25 20 22 24" fill="none" stroke="#605e5c" strokeWidth={1} /><text x="0" y="23" fontSize="9.5" fontWeight="700" fill="#605e5c" fontFamily="Open Sans">DAX</text></svg>
        </div>

        {/* center */}
        <div className="w-[1318px] shrink-0 flex flex-col">
          <div className="h-[679px] shrink-0 flex bg-white">
            <div className="w-[1017px] shrink-0 border-r border-[#a19f9d]">
              <div className="grid grid-cols-[449px_567px] grid-rows-[290px_280px]">
                <Funnel />
                <LineChart />
                <Pie />
                <Bars />
              </div>
              <div className="ml-[2px] mt-[1px] w-[1012px] h-[3px] bg-[repeating-linear-gradient(90deg,#444444_0_3px,transparent_3px_6px)]" />
            </div>
            {/* filters */}
            <div className="w-[301px] shrink-0 flex flex-col">
              <div className="h-[60px] flex items-center pl-[17px]">
                <svg viewBox="0 0 26 24" className="w-[28px] h-[26px]"><path d="M1 1H25L16 12V23L10 19V12Z" fill="none" stroke="#252423" strokeWidth={1.7} /></svg>
                <span className="ml-[9px] w-[66px] text-[23px] font-semibold tracking-[-0.3px]">Filters</span>
                <svg viewBox="0 0 20 14" className="ml-[100px] w-[20px] h-[14px]"><path d="M1 8C5 1 15 1 19 8C15 13 5 13 1 8Z" fill="none" stroke="#252423" strokeWidth={1.3} /><circle cx="10" cy="7.5" r="2.8" fill="#252423" /></svg>
                <span className="ml-[22px]"><Chevs /></span>
              </div>
              <div className="ml-[12px] mt-[7px] w-[270px] h-[47px] border border-[#a19f9d] rounded-[2px] flex items-center pl-[17px] gap-[20px] text-[18px] tracking-[-0.4px]">
                <SearchIc />
                <span>Search</span>
              </div>
              <div className="mt-[6px] h-[1px] bg-[#a19f9d]" />
              <div className="h-[62px] pl-[12px] pr-[17px] flex items-center justify-between text-[17.5px] tracking-[-0.3px] pt-[13px] text-[#3b3a39]">
                <span>Filters on this page</span><span className="tracking-[2px] -mt-[4px]">...</span>
              </div>
              <div className="ml-[12px] w-[276px] h-[68px] bg-white border border-[#c8c6c4] flex items-center justify-center text-[17.5px] tracking-[-0.3px] text-[#3b3a39]">Add data fields here</div>
              <div className="h-[78px] pl-[12px] pr-[17px] flex items-center justify-between text-[17.5px] tracking-[-0.3px] pt-[26px] text-[#3b3a39]">
                <span>Filters on all pages</span><span className="tracking-[2px] -mt-[4px]">...</span>
              </div>
              <div className="ml-[12px] w-[276px] h-[67px] bg-white border border-[#c8c6c4] flex items-center justify-center text-[17.5px] tracking-[-0.3px] text-[#3b3a39]">Add data fields here</div>
            </div>
          </div>
          {/* tabs */}
          <div className="h-[53px] shrink-0 flex items-stretch">
            <div className="w-[192px] flex items-center pl-[18px] relative">
              <svg viewBox="0 0 30 26" className="w-[30px] h-[26px] -mt-[9px]"><rect x="1" y="1" width="28" height="19" fill="#fff" stroke="#484644" strokeWidth={1.8} /><path d="M15 20V24M10 25H20" stroke="#484644" strokeWidth={2} /></svg>
              <div className="absolute left-[15px] bottom-[7px] w-[36px] h-[4px] rounded-full bg-[#117865]" />
              <svg viewBox="0 0 20 32" className="ml-[42px] w-[20px] h-[32px] -mt-[6px]"><rect x="1" y="1" width="18" height="30" rx="2" fill="#fff" stroke="#484644" strokeWidth={1.6} /><rect x="9" y="25" width="2" height="2" fill="#484644" /></svg>
              <svg viewBox="0 0 8 16" className="ml-[28px] w-[8px] h-[16px]"><path d="M7 1L1 8L7 15Z" fill="#d2d0ce" /></svg>
              <svg viewBox="0 0 8 16" className="ml-[26px] w-[8px] h-[16px]"><path d="M1 1L7 8L1 15Z" fill="#d2d0ce" /></svg>
            </div>
            <div className="w-[113px] bg-white border-l border-[#a19f9d] border-b-[6px] border-b-[#117865] flex items-center justify-center pt-[9px] text-[17.5px] font-semibold tracking-[-0.3px]">Page 1</div>
            <div className="w-[59px] bg-[#117865] flex items-center justify-center ml-[1px] pb-[3px]">
              <svg viewBox="0 0 16 16" className="w-[16px] h-[16px]"><path d="M8 0V16M0 8H16" stroke="#fff" strokeWidth={3.5} /></svg>
            </div>
          </div>
        </div>

        {/* visualizations */}
        <div className="w-[271px] shrink-0 border-r border-[#d2d0ce] flex flex-col relative">
          <div className="h-[60px] flex items-center justify-between pl-[12px] pr-[9px]">
            <span className="text-[23px] font-semibold tracking-[-0.3px]">Visualizations</span>
            <Chevs />
          </div>
          <div className="pl-[12px] h-[26px] leading-[26px] text-[16.5px] font-semibold tracking-[-0.3px] -mt-[4px]">Build visual</div>
          <div className="flex items-center pl-[12px] mt-[4px]">
            <div className="w-[48px] h-[48px] rounded-[3px] bg-[#d2d0ce] flex flex-col items-center pt-[7px] gap-[3px]">
              <div className="w-[29px] h-[1px] bg-[#252423] -ml-[5px] mb-[2px]" />
              <div className="w-[35px] h-[12px] bg-[#117865] border border-dashed border-[#252423]" />
              <div className="w-[35px] h-[11px] bg-[#117865] border border-dashed border-[#252423] mt-[2px]" />
            </div>
            <svg viewBox="0 0 36 36" className="ml-[57px] w-[36px] h-[36px]"><path d="M1 35V1H15L27 13V15M1 35H5M15 1V13H27" fill="none" stroke="#252423" strokeWidth={1.5} /><path d="M34 14L22 27C20 31 16 35 9 35C14 33 14 29 16 26C18 24 20 24 22 25" fill="none" stroke="#252423" strokeWidth={1.5} /></svg>
          </div>
          <div className="relative h-[19px] border-b border-[#a19f9d]">
            <svg viewBox="0 0 24 13" className="absolute left-[23px] bottom-[-1px] w-[24px] h-[13px]"><path d="M0 12L12 1L24 12" fill="#f3f2f1" stroke="#a19f9d" strokeWidth={1} /><path d="M1 13H23" stroke="#f3f2f1" strokeWidth={1.5} /></svg>
          </div>
          <div className="grid grid-cols-[repeat(6,42px)] auto-rows-[41.8px] pl-[15px] pt-[18px]">
            {gridIcons.map((ic, i) => (
              <svg key={i} viewBox="0 0 28 28" className="w-[28px] h-[28px] overflow-visible">{ic}</svg>
            ))}
          </div>
          <div className="pl-[17px] mt-[7px] flex gap-[6px]">
            {[0, 1, 2].map((i) => <div key={i} className="w-[3px] h-[3px] rounded-full bg-[#252423]" />)}
          </div>
          <div className="absolute left-0 right-0 top-[505px] h-[1px] bg-[#e1dfdd]" />
          <div className="absolute left-[260px] top-[509px] w-[9px] h-[171px] rounded-[4px] bg-[#cfcdcb]" />
          <div className="absolute left-0 top-[506px] w-full">
            <div className="pl-[17px] h-[40px] flex items-end text-[17.5px] tracking-[-0.3px] leading-[28px] text-[#3b3a39]">Values</div>
            <div className="ml-[6px] mt-[5px] w-[254px] h-[42px] bg-white border border-dashed border-[#c8c6c4] flex items-center pl-[15px] text-[17.5px] tracking-[-0.3px] text-[#3b3a39]">Add data fields here</div>
            <div className="pl-[17px] mt-[14px] h-[28px] leading-[28px] text-[17.5px] font-semibold tracking-[-0.3px] text-[#484644]">Drill through</div>
            <div className="pl-[17px] pr-[33px] mt-[11px] h-[24px] flex items-center justify-between text-[17.5px] tracking-[-0.3px] text-[#3b3a39]">
              <span>Cross-report</span>
              <div className="w-[48px] h-[24px] rounded-full bg-white border border-[#8a8886] flex items-center pl-[6px] gap-[3px] text-[14px] text-[#8a8886]"><div className="w-[12px] h-[12px] rounded-full bg-[#605e5c]" />Off</div>
            </div>
            <div className="pl-[17px] pr-[33px] mt-[16px] h-[24px] flex items-center justify-between text-[17.5px] tracking-[-0.3px] text-[#3b3a39]">
              <span>Keep all filters</span>
              <div className="w-[48px] h-[24px] rounded-full bg-[#117865] flex items-center pl-[7px] gap-[3px] text-[14px] text-white font-semibold">On<div className="w-[12px] h-[12px] rounded-full bg-white" /></div>
            </div>
          </div>
        </div>

        {/* data */}
        <div className="flex-1 flex flex-col">
          <div className="h-[60px] flex items-center justify-between pl-[12px] pr-[9px]">
            <span className="text-[23px] font-semibold tracking-[-0.3px]">Data</span>
            <Chevs />
          </div>
          <div className="ml-[7px] mt-[9px] w-[256px] h-[36px] bg-white border border-[#c8c6c4] rounded-[4px] flex items-center pl-[16px] gap-[8px] text-[19px] tracking-[-0.4px] text-[#605e5c]">
            <SearchIc c="#484644" />
            <span>Search</span>
          </div>
          <div className="mt-[20px] h-[24px] flex items-center pl-[23px] text-[17px] tracking-[-0.3px] text-[#3b3a39]">
            <svg viewBox="0 0 10 16" className="w-[10px] h-[16px]"><path d="M1 1L8 8L1 15" fill="none" stroke="#484644" strokeWidth={1.3} /></svg>
            <svg viewBox="0 0 18 18" className="ml-[13px] w-[18px] h-[18px]"><rect x="1" y="2" width="16" height="14" rx="2" fill="none" stroke="#484644" strokeWidth={1.4} /><path d="M1 7H17M1 11.5H17M6.5 2V16M11.5 2V16" stroke="#484644" strokeWidth={1.1} /></svg>
            <span className="ml-[9px]">Sheet1</span>
          </div>
        </div>
      </div>

      {/* status */}
      <div className="h-[31px] shrink-0 border-t border-[#d2d0ce] flex items-center pt-[5px] bg-[#f3f2f1] text-[17.5px] tracking-[-0.3px] text-[#484644] whitespace-nowrap">
        <span className="ml-[6px] w-[1308px] mt-[4px]">Page 1 of 1</span>
        <div className="w-[8px] h-[2px] bg-[#484644]" />
        <div className="ml-[6px] w-[150px] h-[20px] relative flex items-center">
          <div className="w-full h-[1px] bg-[#605e5c]" />
          <div className="absolute left-[35px] top-[2px] w-[3px] h-[16px] bg-[#484644]" />
          <div className="absolute left-[75px] top-[7px] w-[1px] h-[6px] bg-[#484644]" />
        </div>
        <svg viewBox="0 0 12 12" className="ml-[9px] w-[12px] h-[12px]"><path d="M6 0V12M0 6H12" stroke="#484644" strokeWidth={2} /></svg>
        <span className="ml-[20px] w-[34px] text-[#605e5c]">53%</span>
        <svg viewBox="0 0 24 18" className="ml-[29px] w-[24px] h-[18px]"><rect x=".5" y=".5" width="23" height="17" fill="none" stroke="#484644" /><path d="M4 7V4H8M16 4H20V7M20 11V14H16M8 14H4V11" fill="none" stroke="#484644" strokeWidth={1.3} /></svg>
        <span className="ml-[21px] mt-[4px]">Update available (click to download)</span>
      </div>

      {/* watermark */}
      <div className="absolute left-[840px] top-[866px] w-[240px] flex flex-col items-center pointer-events-none select-none text-[#7a7a7a]/25 leading-none">
        <span className="font-['DejaVu_Sans',sans-serif] font-bold text-[65px] h-[84px] leading-[84px]" dir="rtl" lang="ar">مستقل</span>
        <span className="font-['Roboto',sans-serif] font-medium text-[39px] leading-[36px] tracking-[0.5px]">mostaql.com</span>
      </div>
    </div>
  );
}
